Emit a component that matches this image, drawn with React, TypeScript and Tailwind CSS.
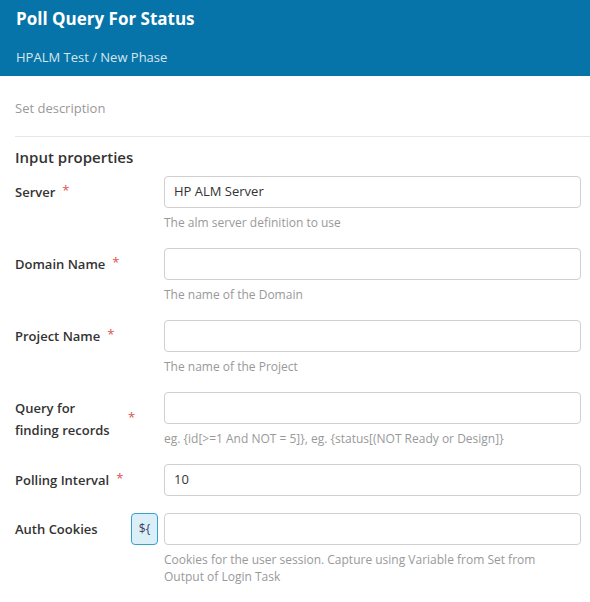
import React from 'react';

interface Field {
  label: string;
  value?: string;
  help?: string[];
  variable?: boolean;
  required?: boolean;
}

const fields: Field[] = [
  { label: 'Server', value: 'HP ALM Server', help: ['The alm server definition to use'], required: true },
  { label: 'Domain Name', help: ['The name of the Domain'], required: true },
  { label: 'Project Name', help: ['The name of the Project'], required: true },
  {
    label: 'Query for finding records',
    help: ['eg. {id[>=1 And NOT = 5]}, eg. {status[(NOT Ready or Design]}'],
    required: true,
  },
  { label: 'Polling Interval', value: '10', required: true },
  {
    label: 'Auth Cookies',
    variable: true,
    help: ['Cookies for the user session. Capture using Variable from Set from', 'Output of Login Task'],
  },
];

function FieldRow({ field }: { field: Field }) {
  return (
    <div className="flex mb-[17px]">
      <div className="w-[149px] shrink-0 flex items-start">
        <div className="flex items-center pt-[5px]">
          <span className="max-w-[106px] text-[13px] font-semibold text-[#333] leading-[22px]">{field.label}</span>
          {field.required && <span className="text-[#d9534f] text-[13px] ml-[7px] -mt-[2px]">*</span>}
        </div>
        {field.variable && (
          <div className="ml-auto mr-[6px] w-[27px] h-[32px] rounded-[4px] border border-[#3a9fcf] bg-[#dbeff8] flex items-center justify-center text-[12px] text-[#3d3d5c]">
            ${'{'}
          </div>
        )}
      </div>
      <div className="flex-1 mr-[9px]">
        <div className="h-[32px] rounded-[4px] border border-[#d0d0d0] bg-white flex items-center px-[9px] text-[13px] text-[#333]">
          {field.value}
        </div>
        {field.help && (
          <div className="mt-[6px] text-[12px] leading-[17px] text-[#999]">
            {field.help.map((h) => (
              <div key={h}>{h}</div>
            ))}
          </div>
        )}
      </div>
    </div>
  );
}

export default function App() {
  return (
    <div className="w-[590px] h-[602px] bg-white overflow-hidden" style={{ fontFamily: '"Open Sans", sans-serif' }}>
      <div className="bg-[#0674a8] h-[76px] px-[16px] pt-[7px]">
        <div className="text-white text-[17px] font-bold leading-[24px]">Poll Query For Status</div>
        <div className="text-[#d6e6ef] text-[13px] mt-[17px] leading-[18px]">HPALM Test / New Phase</div>
      </div>
      <div className="pl-[15px]">
        <div className="pt-[23px] pb-[19px] text-[13px] text-[#999] leading-[18px] border-b border-[#e6e6e6]">
          Set description
        </div>
        <div className="pt-[10px] text-[15px] font-semibold text-[#333] leading-[20px]">Input properties</div>
        <div className="mt-[9px]">
          {fields.map((f) => (
            <FieldRow key={f.label} field={f} />
          ))}
        </div>
      </div>
    </div>
  );
}
